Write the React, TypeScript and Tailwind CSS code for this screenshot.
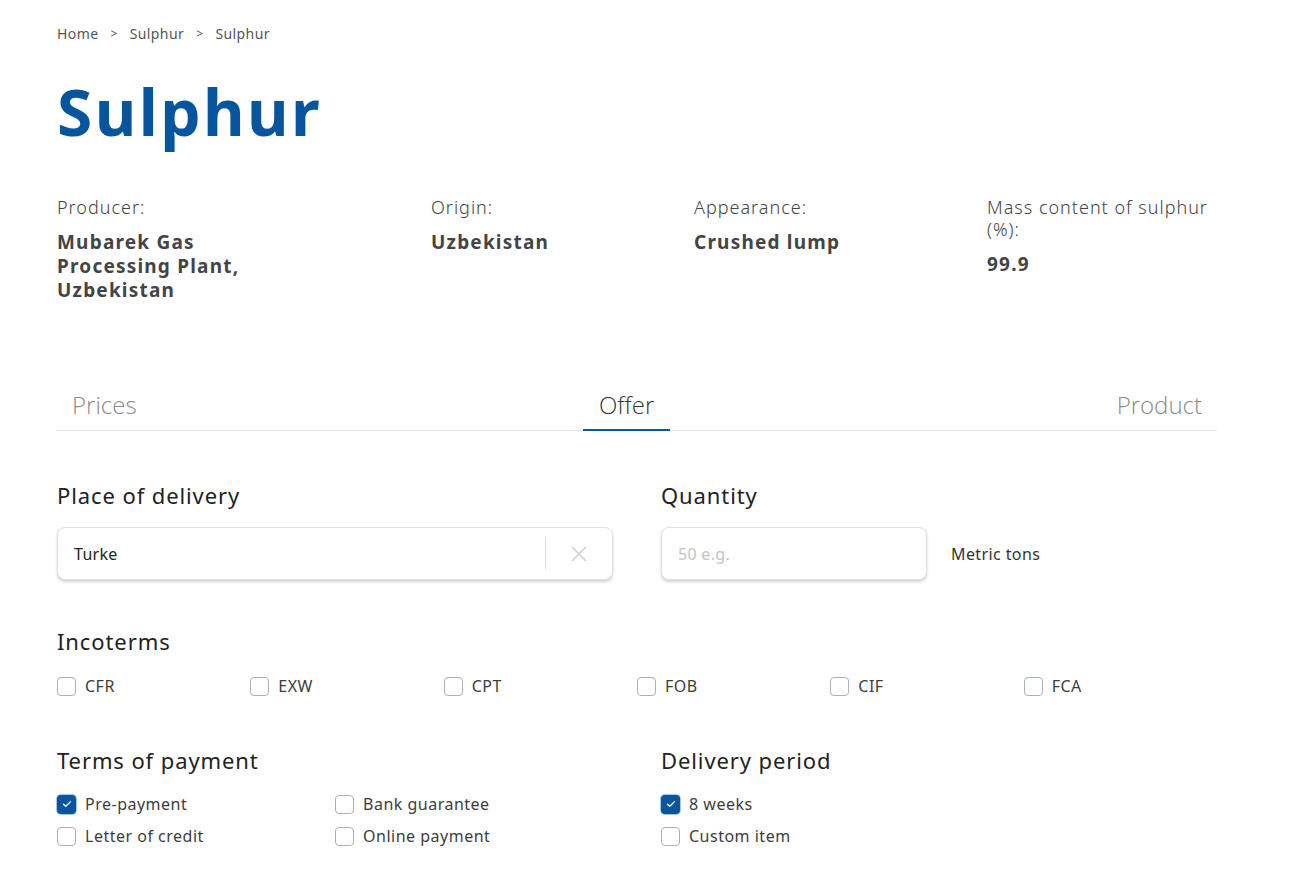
import React from "react";

const F = { fontFamily: '"Noto Sans", "Open Sans", sans-serif' };

function Check({ checked = false, label }: { checked?: boolean; label: string }) {
  return (
    <label className="flex items-center gap-[9px] text-[16px] leading-[20px] tracking-[0.5px] text-[#3d3d3d]">
      <span
        className={
          checked
            ? "flex h-[19px] w-[19px] items-center justify-center rounded-[4px] bg-[#0b559c] shadow-[0_0_0_1px_rgba(11,85,156,0.35)]"
            : "h-[19px] w-[19px] rounded-[4px] border border-[#a9b1bb] bg-white"
        }
      >
        {checked && (
          <svg width="10" height="8" viewBox="0 0 10 8" fill="none">
            <path d="M1.5 4.2 L3.8 6.3 L8.5 1.6" stroke="white" strokeWidth="1.3" strokeLinecap="round" strokeLinejoin="round" />
          </svg>
        )}
      </span>
      <span>{label}</span>
    </label>
  );
}

export default function App() {
  return (
    <div className="min-h-[891px] w-full bg-white" style={F}>
      <div className="ml-[57px] w-[1160px]">
        <nav className="flex items-center pt-[24px] text-[14px] leading-[20px] tracking-[0.4px] text-[#555]">
          <span>Home</span>
          <span className="mx-[12px] text-[12px]">&gt;</span>
          <span>Sulphur</span>
          <span className="mx-[12px] text-[12px]">&gt;</span>
          <span>Sulphur</span>
        </nav>

        <h1 className="mt-[28px] text-[64px] font-bold leading-[80px] tracking-[2.4px] text-[#07559c]">Sulphur</h1>

        <div className="mt-[44px] grid grid-cols-[374px_263px_293px_230px]">
          <div>
            <div className="text-[18px] font-light leading-[22px] tracking-[1px] text-[#444]">Producer:</div>
            <div className="mt-[12px] w-[200px] text-[19px] font-bold leading-[24px] tracking-[1.2px] text-[#444]">
              Mubarek Gas Processing Plant, Uzbekistan
            </div>
          </div>
          <div>
            <div className="text-[18px] font-light leading-[22px] tracking-[1px] text-[#444]">Origin:</div>
            <div className="mt-[12px] text-[19px] font-bold leading-[24px] tracking-[1.2px] text-[#444]">Uzbekistan</div>
          </div>
          <div>
            <div className="text-[18px] font-light leading-[22px] tracking-[1px] text-[#444]">Appearance:</div>
            <div className="mt-[12px] text-[19px] font-bold leading-[24px] tracking-[1.2px] text-[#444]">Crushed lump</div>
          </div>
          <div>
            <div className="w-[222px] text-[18px] font-light leading-[22px] tracking-[1px] text-[#444]">Mass content of sulphur (%):</div>
            <div className="mt-[12px] text-[19px] font-bold leading-[24px] tracking-[1.2px] text-[#444]">99.9</div>
          </div>
        </div>

        <div
          className="mt-[88px] flex items-end justify-between border-b border-[#e3e3e3] px-[15px] text-[24px] font-light"
          style={{ fontFamily: '"Open Sans", sans-serif' }}
        >
          <div className="pb-[10px] leading-[30px] text-[#8a8a8a]">Prices</div>
          <div className="-mb-px border-b-2 border-[#0b559c] px-[16px] pb-[9px] leading-[30px] text-[#333]">Offer</div>
          <div className="pb-[10px] leading-[30px] text-[#8a8a8a]">Product</div>
        </div>

        <div className="mt-[50px] grid grid-cols-[556px_556px] gap-x-[48px]">
          <div>
            <div className="text-[22px] leading-[28px] tracking-[0.9px] text-[#222]">Place of delivery</div>
            <div className="mt-[18px] flex h-[53px] items-center rounded-[8px] border border-[#e2e2e2] bg-white shadow-[0_2px_3px_rgba(0,0,0,0.18)]">
              <div className="flex-1 pl-[16px] text-[16px] tracking-[0.3px] text-[#222]">Turke</div>
              <div className="h-[32px] w-px bg-[#e0e0e0]" />
              <div className="flex w-[66px] items-center justify-center">
                <svg width="18" height="18" viewBox="0 0 18 18">
                  <path d="M2 2 L16 16 M16 2 L2 16" stroke="#cfcfcf" strokeWidth="1.5" />
                </svg>
              </div>
            </div>
          </div>
          <div>
            <div className="text-[22px] leading-[28px] tracking-[0.9px] text-[#222]">Quantity</div>
            <div className="mt-[18px] flex items-center">
              <div className="flex h-[53px] w-[266px] items-center rounded-[8px] border border-[#e2e2e2] bg-white pl-[16px] text-[16px] tracking-[0.3px] text-[#c4c4c4] shadow-[0_2px_3px_rgba(0,0,0,0.18)]">
                50 e.g.
              </div>
              <div className="ml-[24px] text-[16px] tracking-[0.4px] text-[#333]">Metric tons</div>
            </div>
          </div>
        </div>

        <div className="mt-[47px] text-[22px] leading-[28px] tracking-[0.9px] text-[#222]">Incoterms</div>
        <div className="mt-[21px] grid grid-cols-6">
          <Check label="CFR" />
          <Check label="EXW" />
          <Check label="CPT" />
          <Check label="FOB" />
          <Check label="CIF" />
          <Check label="FCA" />
        </div>

        <div className="mt-[50px] grid grid-cols-[556px_556px] gap-x-[48px]">
          <div>
            <div className="text-[22px] leading-[28px] tracking-[0.9px] text-[#222]">Terms of payment</div>
            <div className="mt-[20px] grid grid-cols-[278px_1fr] gap-y-[12px]">
              <Check checked label="Pre-payment" />
              <Check label="Bank guarantee" />
              <Check label="Letter of credit" />
              <Check label="Online payment" />
            </div>
          </div>
          <div>
            <div className="text-[22px] leading-[28px] tracking-[0.9px] text-[#222]">Delivery period</div>
            <div className="mt-[20px] flex flex-col gap-y-[12px]">
              <Check checked label="8 weeks" />
              <Check label="Custom item" />
            </div>
          </div>
        </div>
      </div>
    </div>
  );
}
